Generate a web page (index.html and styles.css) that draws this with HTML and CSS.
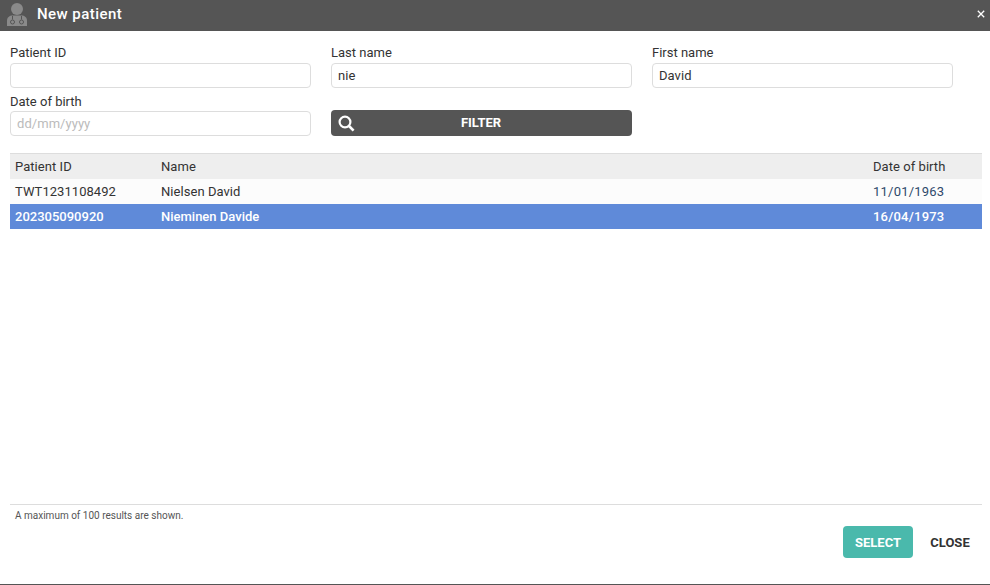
FILE: index.html
```html
<!DOCTYPE html>
<html lang="en">
<head>
<meta charset="utf-8">
<title>New patient</title>
<link rel="stylesheet" href="styles.css">
</head>
<body>
<div class="dialog">
  <header class="titlebar">
    <svg class="doctor" width="20" height="23" viewBox="0 0 20 23" aria-hidden="true">
      <circle cx="10" cy="6" r="6" fill="#8a8a8a"/>
      <path d="M0 23v-5.500C0 14.500 2.500 12.500 5.500 12.500h9c3 0 5.500 2 5.500 5V23z" fill="#8a8a8a"/>
      <path d="M5.500 13v3.500M14.500 13v3.500" fill="none" stroke="#555" stroke-width="1"/>
      <circle cx="5.500" cy="19" r="2" fill="none" stroke="#555" stroke-width="1"/>
      <circle cx="14.500" cy="19" r="2" fill="none" stroke="#555" stroke-width="1"/>
    </svg>
    <h1 class="title">New patient</h1>
    <svg class="close-x" width="8" height="8" viewBox="0 0 8 8" aria-hidden="true">
      <path d="M.8.8l6.400 6.400M7.200.8L.8 7.200" stroke="#fff" stroke-width="1.300"/>
    </svg>
  </header>
  <form class="filters">
    <label class="field"><span class="field-label">Patient ID</span><input class="input" type="text"></label>
    <label class="field"><span class="field-label">Last name</span><input class="input" type="text" value="nie"></label>
    <label class="field"><span class="field-label">First name</span><input class="input" type="text" value="David"></label>
    <label class="field field-low"><span class="field-label">Date of birth</span><input class="input" type="text" placeholder="dd/mm/yyyy"></label>
    <button class="filter-btn" type="button">
      <svg class="search" width="17" height="17" viewBox="0 0 17 17" aria-hidden="true">
        <circle cx="7" cy="7" r="5.400" fill="none" stroke="#fff" stroke-width="2.200"/>
        <path d="M11 11l4.600 4.600" stroke="#fff" stroke-width="2.600"/>
      </svg>
      FILTER
    </button>
  </form>
  <div class="table">
    <div class="row head"><span>Patient ID</span><span>Name</span><span>Date of birth</span></div>
    <div class="row plain"><span>TWT1231108492</span><span>Nielsen David</span><span class="date date-plain">11/01/1963</span></div>
    <div class="row selected"><span>202305090920</span><span>Nieminen Davide</span><span class="date">16/04/1973</span></div>
  </div>
  <footer class="footer">
    <p class="note">A maximum of 100 results are shown.</p>
    <div class="actions">
      <button class="btn-select" type="button">SELECT</button>
      <button class="btn-close" type="button">CLOSE</button>
    </div>
  </footer>
</div>
</body>
</html>
```
FILE: styles.css
```css
* { box-sizing: border-box; }
html, body { margin: 0; height: 100%; overflow: hidden; }
body { background: #fff; font-family: Roboto, "Liberation Sans", sans-serif; color: #333; font-size: 13px; }
.dialog { height: 585px; display: flex; flex-direction: column; border-bottom: 1px solid #555; }
.titlebar { height: 31px; background: #555; display: flex; align-items: flex-start; padding: 0 5px 0 7px; flex: none; }
.doctor { flex: none; margin-top: 3px; }
.title { margin: 0 0 0 10px; flex: 1; color: #fff; font-size: 15px; font-weight: 500; letter-spacing: .45px; line-height: 28px; }
.close-x { margin-top: 10px; }
.filters { display: grid; grid-template-columns: repeat(3, 301px); column-gap: 20px; padding: 14px 0 0 10px; flex: none; }
.field { display: flex; flex-direction: column; height: 49px; }
.field-label { height: 18px; line-height: 15px; color: #333; }
.field-low { height: 48px; }
.field-low .field-label { height: 17px; }
.input { height: 25px; width: 301px; border: 1px solid #ddd; border-radius: 4px; padding: 0 6px; font: 13px Roboto, sans-serif; color: #333; outline: none; background: #fff; letter-spacing: .05px; }
.input::placeholder { color: #bbb; opacity: 1; }
.filter-btn { height: 26px; margin-top: 16px; width: 301px; background: #555; border: 0; border-radius: 4px; color: #fff; font: 700 13px Roboto, sans-serif; position: relative; padding: 0 1px 2px 0; }
.search { position: absolute; left: 7px; top: 5px; }
.table { margin: 11px 8px 0 10px; border-top: 1px solid #ddd; flex: 1; }
.row { display: grid; grid-template-columns: 146px 712px 1fr; height: 25px; align-items: center; padding-left: 5px; letter-spacing: .05px; }
.head { background: #eee; }
.plain { background: #fcfcfc; }
.date { letter-spacing: .22px; }
.date-plain { color: #2f4a6b; }
.selected { background: #5f8ad9; color: #fff; font-weight: 500; letter-spacing: 0; }
.footer { margin: 0 8px 0 10px; border-top: 1px solid #ddd; height: 80px; flex: none; }
.note { margin: 0; padding: 5px 0 0 5px; font-size: 10px; line-height: 12px; color: #555; }
.actions { display: flex; justify-content: flex-end; align-items: center; margin-top: 4px; }
.btn-select { width: 70px; height: 32px; background: #4ab9ac; color: #fff; border: 0; border-radius: 4px; font: 700 13px Roboto, sans-serif; padding: 0; }
.btn-close { width: 69px; height: 32px; background: none; border: 0; color: #333; font: 700 13px Roboto, sans-serif; padding: 0 0 0 5px; }
```
